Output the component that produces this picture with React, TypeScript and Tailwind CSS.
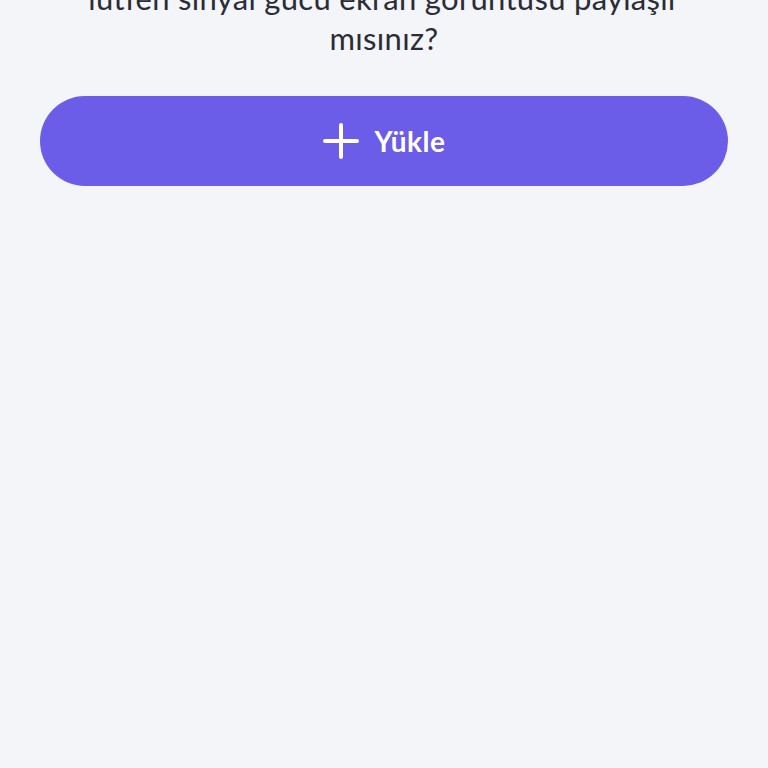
export default function App() {
  return (
    <div
      className="min-h-[768px] w-full bg-[#f3f5f9] overflow-hidden"
      style={{ fontFamily: "Lato, 'Open Sans', sans-serif" }}
    >
      <div className="-mt-[22px] px-10">
        <p className="mx-auto max-w-[640px] text-center text-[31px] leading-[40px] tracking-[0.3px] text-[#2a2c36]">
          lütfen sinyal gücü ekran görüntüsü paylaşır mısınız?
        </p>
        <button className="mt-[38px] flex h-[90px] w-full items-center justify-center gap-4 rounded-full bg-[#6b5de8] text-white">
          <svg width="36" height="36" viewBox="0 0 36 36" fill="none">
            <path d="M18 2v32M2 18h32" stroke="white" strokeWidth="4" strokeLinecap="round" />
          </svg>
          <span className="text-[28px] font-bold tracking-[0.5px]">Yükle</span>
        </button>
      </div>
    </div>
  );
}
